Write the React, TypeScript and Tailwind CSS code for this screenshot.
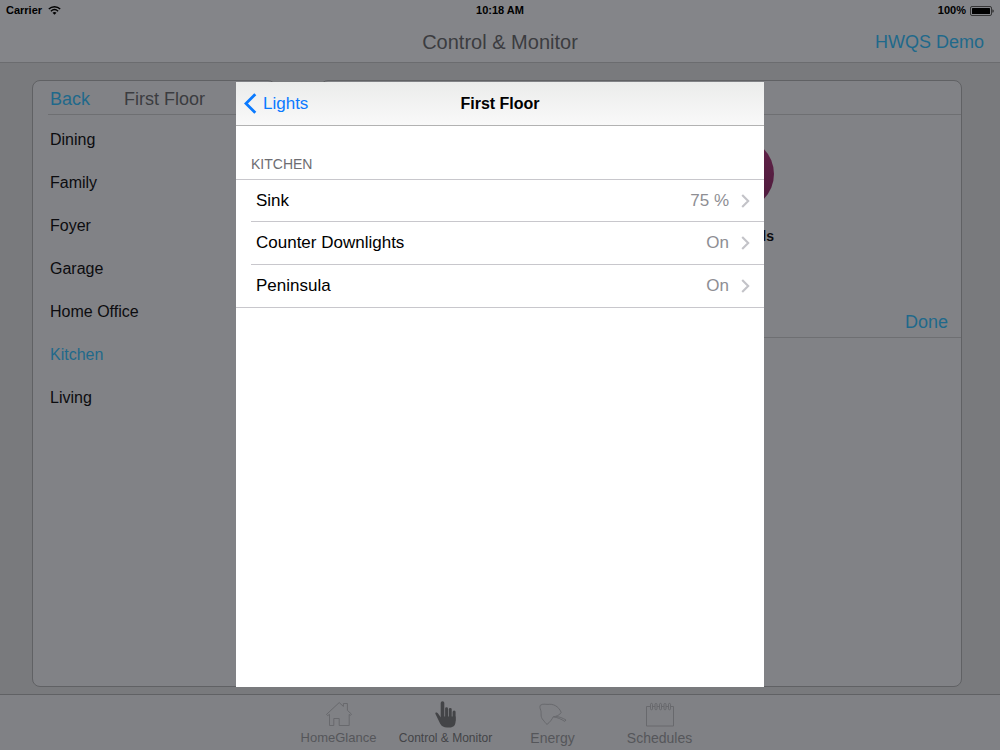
import type { ReactNode } from "react";
import clsx from "clsx";

type Light = {
  name: string;
  level: string;
};

type Tab = {
  label: string;
  textSize: string;
  icon: ReactNode;
};

const rooms = [
  "Dining",
  "Family",
  "Foyer",
  "Garage",
  "Home Office",
  "Kitchen",
  "Living",
];

const lights: Light[] = [
  { name: "Sink", level: "75 %" },
  { name: "Counter Downlights", level: "On" },
  { name: "Peninsula", level: "On" },
];

function WifiIcon() {
  return (
    <svg width="13" height="9" viewBox="0 0 13 9" fill="none" aria-hidden="true">
      <path d="M0.8 3.1C4 0 9 0 12.2 3.1" stroke="currentColor" strokeWidth="1.4" />
      <path d="M2.9 5.2C5 3.3 8 3.3 10.1 5.2" stroke="currentColor" strokeWidth="1.4" />
      <path d="M6.5 8.8L4.5 6.7C5.6 5.7 7.4 5.7 8.5 6.7Z" fill="currentColor" />
    </svg>
  );
}

function BatteryIcon() {
  return (
    <svg width="24" height="10" viewBox="0 0 24 10" fill="none" aria-hidden="true">
      <rect x="0.5" y="0.5" width="21" height="9" rx="1.5" stroke="#222" strokeWidth="0.8" />
      <rect x="2" y="2" width="18" height="6" rx="0.5" fill="black" />
      <path d="M22.5 3.2C24 3.6 24 6.4 22.5 6.8Z" fill="#111" />
    </svg>
  );
}

function HomeIcon() {
  return (
    <svg width="28" height="26" viewBox="0 0 28 26" fill="none" stroke="currentColor" aria-hidden="true">
      <path
        d="M1.5 13.4L14.2 1.6L18.4 5.4V2.5H22.4V9.3L26.5 13.2L25.4 14.4L24.2 13.4V24.5H14.2V17.5H8.8V24.5H4.5V13.4L2.6 14.6Z"
        strokeWidth="1"
      />
    </svg>
  );
}

function HandIcon() {
  return (
    <svg width="22" height="27" viewBox="0 0 22 27" fill="currentColor" aria-hidden="true">
      <rect x="5.7" y="0.3" width="3.6" height="18" rx="1.8" />
      <rect x="10.1" y="6.2" width="2.9" height="12" rx="1.4" />
      <rect x="13.8" y="7" width="2.9" height="12" rx="1.4" />
      <rect x="17.6" y="9.4" width="3" height="11" rx="1.5" />
      <path d="M0.5 11.8C1.5 10.9 2.6 11.7 3.2 12.7L5.7 16.3L9 15.5H20.6V20C20.6 24.4 18.5 26.5 14.5 26.5H12C8.8 26.5 6.7 25.3 5.2 22.8L1.1 14.2C0.6 13.2 0 12.4 0.5 11.8Z" />
    </svg>
  );
}

function EnergyIcon() {
  return (
    <svg width="28" height="25" viewBox="0 0 28 25" fill="none" stroke="currentColor" strokeLinejoin="round" aria-hidden="true">
      <path
        d="M1.4 3.2C4 1.6 6 2.4 9 2.4C14 1.6 19.5 4 22.2 10.4C20.8 13.2 17.2 14.4 14.2 14.8C13 17.4 10.8 20.4 8 22.4C6.2 21.2 6 19.8 4.2 18.1C0.9 14.5 2.7 11.3 1.8 8.5C0.9 6.2 0.6 4.3 1.4 3.2Z"
        strokeWidth="1"
      />
      <path d="M14.3 14.9C19 15.5 21.8 17 25.8 19.4L27 18C23.5 16 20.2 14.6 16.6 14.5" strokeWidth="1" />
    </svg>
  );
}

function CalendarIcon() {
  return (
    <svg width="28" height="25" viewBox="0 0 28 25" fill="none" stroke="currentColor" aria-hidden="true">
      <path d="M4.5 4.5H0.5V24H27.5V4.5H25" strokeWidth="1" />
      {[5.5, 10, 14.5, 19, 23.5].map((x) => (
        <rect key={x} x={x - 1} y="1.4" width="2" height="6.4" rx="1" strokeWidth="1" />
      ))}
      <path d="M6.5 4.5H9M11 4.5H13.5M15.5 4.5H18M20 4.5H22.5" strokeWidth="1" />
    </svg>
  );
}

// Longer labels use a smaller size so every tab keeps the same width
const tabs: Tab[] = [
  { label: "HomeGlance", textSize: "text-[13px]", icon: <HomeIcon /> },
  { label: "Control & Monitor", textSize: "text-xs", icon: <HandIcon /> },
  { label: "Energy", textSize: "text-sm", icon: <EnergyIcon /> },
  { label: "Schedules", textSize: "text-sm", icon: <CalendarIcon /> },
];

function Header() {
  return (
    <header className="border-b border-[#6b6c6f] bg-[#848589]">
      <div className="grid h-[21px] grid-cols-3 items-center px-1.5 text-[11px] font-bold text-black">
        <div className="flex items-center gap-1.5">
          Carrier
          <WifiIcon />
        </div>
        <div className="text-center">10:18 AM</div>
        <div className="flex items-center justify-end gap-1">
          100%
          <BatteryIcon />
        </div>
      </div>
      <div className="grid h-[41px] grid-cols-3 items-center px-4">
        <h1 className="col-start-2 text-center text-xl text-[#3b3c40]">
          Control & Monitor
        </h1>
        <button className="justify-self-end text-lg text-[#1f698b]">
          HWQS Demo
        </button>
      </div>
    </header>
  );
}

function RoomsPanel() {
  return (
    <section className="w-[244px] shrink-0 rounded-lg border border-[#606164] bg-[#818286] pl-[15px]">
      <div className="flex h-[34px] items-center gap-[34px] border-b border-[#6e6f72] pt-0.5 pl-0.5 text-lg">
        <button className="text-[#1f698b]">Back</button>
        <h2 className="text-[#3b3c40]">First Floor</h2>
      </div>
      <ul className="mt-[3px] pl-0.5">
        {rooms.map((room) => (
          <li key={room}>
            <button
              className={clsx(
                "h-[43px] w-full text-left",
                room === "Kitchen" ? "text-[#1f698b]" : "text-[#0c0c0f]",
              )}
            >
              {room}
            </button>
          </li>
        ))}
      </ul>
    </section>
  );
}

function ControlsPanel() {
  return (
    <section className="flex-1 rounded-lg border border-[#606164] bg-[#818286]">
      <div className="h-[34px] border-b border-[#6e6f72]" />
      <div className="flex h-[223px] flex-col border-b border-[#6e6f72]">
        <div className="flex flex-1 flex-col items-end pt-[23px] pr-[187px]">
          <div className="size-[72px] rounded-full bg-linear-to-b from-[#622349] to-[#4c1a3b]" />
          <span className="mt-4 text-sm font-bold text-[#0c0c0f]">ls</span>
        </div>
        <div className="flex h-[30px] items-center justify-end pr-[13px]">
          <button className="text-lg text-[#1f698b]">Done</button>
        </div>
      </div>
    </section>
  );
}

function LightsDialog() {
  return (
    <div
      role="dialog"
      aria-labelledby="dialog-title"
      className="w-[528px] overflow-hidden bg-white text-[17px]"
    >
      <div className="grid h-11 grid-cols-3 items-center border-b border-[#b2b2b2] bg-linear-to-b from-[#ebeceb] to-[#f9f9f9] px-2">
        <button className="flex items-center gap-1.5 text-[#0a7aff]">
          <svg width="13" height="21" viewBox="0 0 13 21" fill="none" aria-hidden="true">
            <path d="M11.3 1.3L2 10.5L11.3 19.7" stroke="currentColor" strokeWidth="2.8" />
          </svg>
          Lights
        </button>
        <h2 id="dialog-title" className="text-center text-base font-bold text-black">
          First Floor
        </h2>
      </div>
      <h3 className="flex h-[54px] items-end border-b border-[#c8c7cc] pb-[5px] pl-[15px] text-sm text-[#6d6d72]">
        KITCHEN
      </h3>
      <ul>
        {lights.map((light, index) => (
          <li
            key={light.name}
            className={clsx(
              "border-b border-[#c8c7cc]",
              index < lights.length - 1 ? "ml-[15px]" : "pl-[15px]",
            )}
          >
            <button
              className={clsx(
                "flex w-full items-center pr-3.5 pl-[5px]",
                index === 0 ? "h-[41px]" : "h-[42px]",
              )}
            >
              <span className="text-black">{light.name}</span>
              <span className="ml-auto text-[#8e8e93]">{light.level}</span>
              <svg className="ml-3" width="9" height="14" viewBox="0 0 9 14" fill="none" aria-hidden="true">
                <path d="M1.2 1L7.2 7L1.2 13" stroke="#c3c3c8" strokeWidth="2.1" />
              </svg>
            </button>
          </li>
        ))}
      </ul>
    </div>
  );
}

function TabBar() {
  return (
    <nav className="flex h-14 justify-center border-t border-[#606164] bg-[#808185] pr-0.5">
      {tabs.map((tab) => (
        <button
          key={tab.label}
          className={clsx(
            "flex w-[107px] flex-col items-center pt-[5px]",
            tab.label === "Control & Monitor" ? "text-[#434447]" : "text-[#55565a]",
          )}
        >
          <span
            className={clsx(
              "flex h-7 items-center",
              tab.label !== "Control & Monitor" && "text-[#68696d]",
            )}
          >
            {tab.icon}
          </span>
          <span className={clsx("leading-5 whitespace-nowrap", tab.textSize)}>
            {tab.label}
          </span>
        </button>
      ))}
    </nav>
  );
}

function App() {
  return (
    <div className="relative flex min-h-screen flex-col bg-[#797a7d] font-['Liberation_Sans',sans-serif]">
      <Header />
      <main className="flex flex-1 gap-11 pt-[17px] pr-[38px] pb-[7px] pl-8">
        <RoomsPanel />
        <ControlsPanel />
      </main>
      <TabBar />

      {/* Light list shown over the page */}
      <div className="absolute inset-x-0 top-[82px] bottom-[63px] flex justify-center">
        <LightsDialog />
      </div>
    </div>
  );
}

export default App;
